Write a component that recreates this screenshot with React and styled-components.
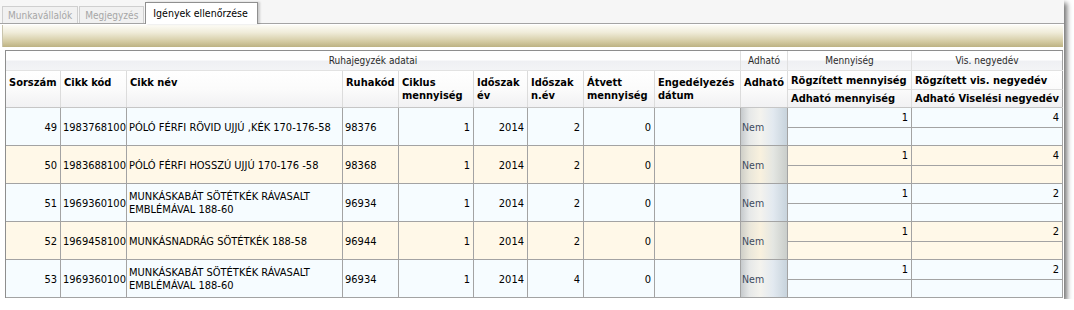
import React from "react";
import styled, { createGlobalStyle, css } from "styled-components";

const GlobalStyle = createGlobalStyle`
  html, body {
    margin: 0;
    padding: 0;
    background: #ffffff;
  }
`;

// column widths, each one includes its right border line
const COLS = [55, 66, 216, 56, 75, 54, 56, 71, 86, 47, 124, 151];
const template = COLS.map(w => `${w}px`).join(" ");

const condensed = css`
  font-family: "DejaVu Sans Condensed", "DejaVu Sans", "Liberation Sans", sans-serif;
  font-stretch: condensed;
`;

const rows = [
  { no: 49, code: "1983768100", name: "PÓLÓ FÉRFI RÖVID UJJÚ ,KÉK 170-176-58", ruha: "98376", ciklus: 1, ev: 2014, nev: 2, atvett: 0, qty: 1, quarter: 4 },
  { no: 50, code: "1983688100", name: "PÓLÓ FÉRFI HOSSZÚ UJJÚ 170-176 -58", ruha: "98368", ciklus: 1, ev: 2014, nev: 2, atvett: 0, qty: 1, quarter: 4 },
  { no: 51, code: "1969360100", name: "MUNKÁSKABÁT SÖTÉTKÉK RÁVASALT EMBLÉMÁVAL 188-60", ruha: "96934", ciklus: 1, ev: 2014, nev: 2, atvett: 0, qty: 1, quarter: 2 },
  { no: 52, code: "1969458100", name: "MUNKÁSNADRÁG SÖTÉTKÉK 188-58", ruha: "96944", ciklus: 1, ev: 2014, nev: 2, atvett: 0, qty: 1, quarter: 2 },
  { no: 53, code: "1969360100", name: "MUNKÁSKABÁT SÖTÉTKÉK RÁVASALT EMBLÉMÁVAL 188-60", ruha: "96934", ciklus: 1, ev: 2014, nev: 4, atvett: 0, qty: 1, quarter: 2 }
];

export default function App() {
  return (
    <>
      <GlobalStyle />
      <Window>
        <TabStrip>
          <Tab>Munkavállalók</Tab>
          <Tab>Megjegyzés</Tab>
          <Tab $active>Igények ellenőrzése</Tab>
        </TabStrip>
        <Toolbar />
        <Grid>
          <GroupRow>
            <GroupCell $span={9}>Ruhajegyzék adatai</GroupCell>
            <GroupCell>Adható</GroupCell>
            <GroupCell>Mennyiség</GroupCell>
            <GroupCell $last>Vis. negyedév</GroupCell>
          </GroupRow>
          <HeaderRow>
            <HeadCell>Sorszám</HeadCell>
            <HeadCell>Cikk kód</HeadCell>
            <HeadCell>Cikk név</HeadCell>
            <HeadCell>Ruhakód</HeadCell>
            <HeadCell>Ciklus<br />mennyiség</HeadCell>
            <HeadCell>Időszak<br />év</HeadCell>
            <HeadCell>Időszak<br />n.év</HeadCell>
            <HeadCell>Átvett<br />mennyiség</HeadCell>
            <HeadCell>Engedélyezés<br />dátum</HeadCell>
            <HeadCell>Adható</HeadCell>
            <SubHead $top>Rögzített mennyiség</SubHead>
            <SubHead $top $last>Rögzített vis. negyedév</SubHead>
            <SubHead>Adható mennyiség</SubHead>
            <SubHead $last>Adható Viselési negyedév</SubHead>
          </HeaderRow>
          {rows.map((r, i) => {
            const tone = i % 2 === 0 ? "blue" : "cream";
            return (
              <DataRow key={r.no} $tone={tone}>
                <Cell $num>{r.no}</Cell>
                <Cell>{r.code}</Cell>
                <Cell>{r.name}</Cell>
                <Cell>{r.ruha}</Cell>
                <Cell $num>{r.ciklus}</Cell>
                <Cell $num>{r.ev}</Cell>
                <Cell $num>{r.nev}</Cell>
                <Cell $num>{r.atvett}</Cell>
                <Cell />
                <FlagCell $tone={tone}>Nem</FlagCell>
                <SubCell $top>{r.qty}</SubCell>
                <SubCell $top $last>{r.quarter}</SubCell>
                <SubCell />
                <SubCell $last />
              </DataRow>
            );
          })}
        </Grid>
      </Window>
    </>
  );
}

const Window = styled.div`
  width: 1064px;
  height: 299px;
  overflow: hidden;
  background: #ffffff;
  box-shadow: 3px 3px 5px rgba(0, 0, 0, 0.55);
  display: flex;
  flex-direction: column;
`;

const TabStrip = styled.div`
  height: 23px;
  display: flex;
  align-items: flex-end;
  padding-left: 2px;
  background: #f6f6f6;
  border-bottom: 1px solid #a4a4a4;
`;

const Tab = styled.div`
  ${condensed};
  font-size: 10px;
  height: 17px;
  line-height: 17px;
  padding: 0 5px;
  box-sizing: border-box;
  margin-right: 1px;
  color: #a6a6a6;
  background: #f1f1f1;
  border: 1px solid #cfcfcf;
  border-bottom: none;
  white-space: nowrap;

  ${p =>
    p.$active &&
    css`
      height: 22px;
      line-height: 20px;
      margin-bottom: -1px;
      padding: 0 9px 0 7px;
      color: #000000;
      font-size: 10.5px;
      background: #ffffff;
      border-color: #8f8f8f;
      box-shadow: 2px 0 2px rgba(0, 0, 0, 0.18);
      position: relative;
    `}
`;

const Toolbar = styled.div`
  height: 22px;
  margin: 1px 1px 0 2px;
  border-left: 1px solid #c9c4ad;
  background: linear-gradient(#fdfcf6 0%, #efebd8 35%, #d4cba3 75%, #bdb283 100%);
`;

const Grid = styled.div`
  margin: 3px 0 0 5px;
  width: 1058px;
  border-left: 1px solid #8e8e8e;
  border-top: 1px solid #8e8e8e;
  box-sizing: border-box;
  background: #ffffff;
`;

const GroupRow = styled.div`
  display: grid;
  grid-template-columns: ${template};
  height: 20px;
  box-sizing: border-box;
  border-bottom: 1px solid #e2e2e2;
  background: linear-gradient(#ffffff 0%, #ffffff 48%, #eff0f3 52%, #f3f4f6 100%);
`;

const GroupCell = styled.div`
  ${condensed};
  grid-column: span ${p => p.$span || 1};
  font-size: 10px;
  color: #2a2a2a;
  display: flex;
  align-items: center;
  justify-content: center;
  border-right: 1px solid ${p => (p.$last ? "#a0a0a0" : "#e0e0e0")};
`;

const HeaderRow = styled.div`
  display: grid;
  grid-template-columns: ${template};
  grid-template-rows: 19px 17px;
  border-bottom: 1px solid #c6c6c6;
  background: linear-gradient(#ffffff 0%, #fbfbfb 50%, #f1f1f3 100%);
`;

const HeadCell = styled.div`
  ${condensed};
  grid-row: span 2;
  font-size: 11px;
  font-weight: bold;
  line-height: 13px;
  color: #000000;
  padding: 5px 0 0 3px;
  border-right: 1px solid #dcdcdc;
  white-space: nowrap;
  overflow: hidden;
`;

const SubHead = styled.div`
  ${condensed};
  font-size: 11px;
  font-weight: bold;
  color: #000000;
  padding: 0 0 0 3px;
  display: flex;
  align-items: center;
  white-space: nowrap;
  border-right: 1px solid ${p => (p.$last ? "#a0a0a0" : "#dcdcdc")};
  border-bottom: ${p => (p.$top ? "1px solid #e0e0e0" : "none")};
`;

const DataRow = styled.div`
  display: grid;
  grid-template-columns: ${template};
  grid-template-rows: 20px 17px;
  border-bottom: 1px solid #a3a3a3;
  background: ${p => (p.$tone === "blue" ? "#f6fcff" : "#fff8e8")};
`;

const Cell = styled.div`
  ${condensed};
  grid-row: span 2;
  font-size: 11px;
  line-height: 13px;
  color: #000000;
  display: flex;
  align-items: center;
  justify-content: ${p => (p.$num ? "flex-end" : "flex-start")};
  text-align: ${p => (p.$num ? "right" : "left")};
  padding: 1px ${p => (p.$num ? "3px" : "2px")} 0 2px;
  border-right: 1px solid #a3a3a3;
`;

const FlagCell = styled(Cell)`
  font-size: 10.5px;
  color: #3d4b5e;
  padding-left: 1px;
  background: ${p =>
    p.$tone === "blue"
      ? "linear-gradient(90deg, #c6cacd 0%, #e6e8e8 18%, #f4f3ee 42%, #e2e9f0 70%, #c7d3dc 100%)"
      : "linear-gradient(90deg, #cfcfc8 0%, #e9e6da 18%, #f9f1de 42%, #e4e6e2 70%, #c9cdca 100%)"};
`;

const SubCell = styled.div`
  ${condensed};
  font-size: 11px;
  color: #000000;
  display: flex;
  align-items: center;
  justify-content: flex-end;
  padding-right: 3px;
  border-right: 1px solid #a3a3a3;
  border-bottom: ${p => (p.$top ? "1px solid #a3a3a3" : "none")};
`;
